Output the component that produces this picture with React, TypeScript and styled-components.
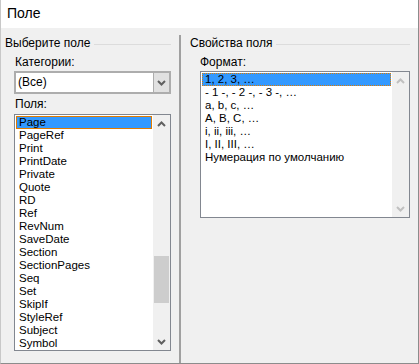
import styled, { createGlobalStyle } from 'styled-components';

const GlobalStyle = createGlobalStyle`
  html, body {
    margin: 0;
    padding: 0;
    background: #f0f0f0;
  }
  body {
    font-family: "Liberation Sans", Arial, sans-serif;
    font-size: 12px;
    color: #000;
  }
`;

const Window = styled.div`
  width: 419px;
  height: 364px;
  box-sizing: border-box;
  border: 1px solid #8c8c8c;
  border-top: none;
  border-left-color: #c8c8c8;
  display: flex;
  flex-direction: column;
  background: #f0f0f0;
  overflow: hidden;
`;

const TitleBar = styled.div`
  height: 28px;
  flex: none;
  background: #fff;
  display: flex;
  align-items: center;
  padding-left: 6px;
  font-size: 14px;
  padding-bottom: 2px;
  box-sizing: border-box;
`;

const Body = styled.div`
  flex: 1;
  display: grid;
  grid-template-columns: 178px 1fr;
  padding-top: 7px;
`;

const LeftPane = styled.div`
  padding: 0 8px 0 4px;
  display: flex;
  flex-direction: column;
`;

const RightPane = styled.div`
  border-left: 2px solid #a0a0a0;
  padding: 0 8px 0 9px;
  display: flex;
  flex-direction: column;
`;

const GroupTitle = styled.div`
  display: flex;
  align-items: center;
  gap: 4px;
  height: 16px;
  white-space: nowrap;
  &::after {
    content: '';
    flex: 1;
    height: 1px;
    background: #dcdcdc;
    margin-top: 2px;
  }
`;

const Label = styled.div<{ $top: number }>`
  margin: ${p => p.$top}px 0 0 10px;
  height: 16px;
  line-height: 16px;
`;

const Combo = styled.div`
  margin: 1px 0 0 9px;
  height: 23px;
  box-sizing: border-box;
  border: 2px solid #adadad;
  background: #fff;
  display: flex;
  align-items: stretch;
`;

const ComboText = styled.div`
  flex: 1;
  padding-left: 2px;
  line-height: 19px;
`;

const ComboButton = styled.div`
  width: 15px;
  background: #e1e1e1;
  border-left: 1px solid #adadad;
  display: flex;
  align-items: center;
  justify-content: center;
`;

const ListFrame = styled.div<{ $left: number; $top: number }>`
  margin: ${p => p.$top}px 0 0 ${p => p.$left}px;
`;

const ListBox = styled.div<{ $height: number }>`
  height: ${p => p.$height}px;
  box-sizing: border-box;
  border: 1px solid #828790;
  background: #fff;
  display: flex;
`;

const Items = styled.div`
  flex: 1;
  padding: 1px 1px 0 1px;
  overflow: hidden;
`;

const Item = styled.div<{ $selected?: boolean; $dotted?: boolean }>`
  height: 13px;
  line-height: 11px;
  font-size: 11.5px;
  padding-left: 2px;
  white-space: nowrap;
  box-sizing: border-box;
  background: ${p => (p.$selected ? '#3399ff' : 'transparent')};
  border: 1px ${p => (p.$dotted ? 'dotted' : 'solid')}
    ${p => (p.$selected ? '#e07b00' : 'transparent')};
`;

const ScrollBar = styled.div`
  width: 17px;
  background: #f0f0f0;
  display: flex;
  flex-direction: column;
  align-items: center;
`;

const Arrow = styled.div`
  height: 17px;
  width: 17px;
  display: flex;
  align-items: center;
  justify-content: center;
  flex: none;
`;

const Track = styled.div`
  flex: 1;
  width: 100%;
  display: flex;
  flex-direction: column;
`;

const Thumb = styled.div<{ $top: number; $size: number }>`
  margin-top: ${p => p.$top}px;
  height: ${p => p.$size}px;
  margin-left: 1px;
  width: 15px;
  background: #cdcdcd;
`;

const Chevron = ({ up, color }: { up?: boolean; color: string }) => (
  <svg width="9" height="6" viewBox="0 0 9 6">
    <path
      d={up ? 'M1 5 L4.5 1.5 L8 5' : 'M1 1 L4.5 4.5 L8 1'}
      fill="none"
      stroke={color}
      strokeWidth="2"
    />
  </svg>
);

const fields = [
  'Page', 'PageRef', 'Print', 'PrintDate', 'Private', 'Quote', 'RD', 'Ref',
  'RevNum', 'SaveDate', 'Section', 'SectionPages', 'Seq', 'Set', 'SkipIf',
  'StyleRef', 'Subject', 'Symbol',
];

const formats = [
  '1, 2, 3, …',
  '- 1 -, - 2 -, - 3 -, …',
  'a, b, c, …',
  'A, B, C, …',
  'i, ii, iii, …',
  'I, II, III, …',
  'Нумерация по умолчанию',
];

export default function App() {
  return (
    <>
      <GlobalStyle />
      <Window>
        <TitleBar>Поле</TitleBar>
        <Body>
          <LeftPane>
            <GroupTitle>Выберите поле</GroupTitle>
            <Label $top={3}>Категории:</Label>
            <Combo>
              <ComboText>(Все)</ComboText>
              <ComboButton>
                <Chevron color="#606060" />
              </ComboButton>
            </Combo>
            <Label $top={2}>Поля:</Label>
            <ListFrame $left={9} $top={2}>
              <ListBox $height={237}>
                <Items>
                  {fields.map((f, i) => (
                    <Item key={f} $selected={i === 0}>{f}</Item>
                  ))}
                </Items>
                <ScrollBar>
                  <Arrow><Chevron up color="#606060" /></Arrow>
                  <Track>
                    <Thumb $top={124} $size={47} />
                  </Track>
                  <Arrow><Chevron color="#606060" /></Arrow>
                </ScrollBar>
              </ListBox>
            </ListFrame>
          </LeftPane>
          <RightPane>
            <GroupTitle>Свойства поля</GroupTitle>
            <Label $top={3}>Формат:</Label>
            <ListFrame $left={10} $top={1}>
              <ListBox $height={147}>
                <Items>
                  {formats.map((f, i) => (
                    <Item key={f} $selected={i === 0} $dotted>{f}</Item>
                  ))}
                </Items>
                <ScrollBar>
                  <Arrow><Chevron up color="#c0c0c0" /></Arrow>
                  <Track />
                  <Arrow><Chevron color="#c0c0c0" /></Arrow>
                </ScrollBar>
              </ListBox>
            </ListFrame>
          </RightPane>
        </Body>
      </Window>
    </>
  );
}
